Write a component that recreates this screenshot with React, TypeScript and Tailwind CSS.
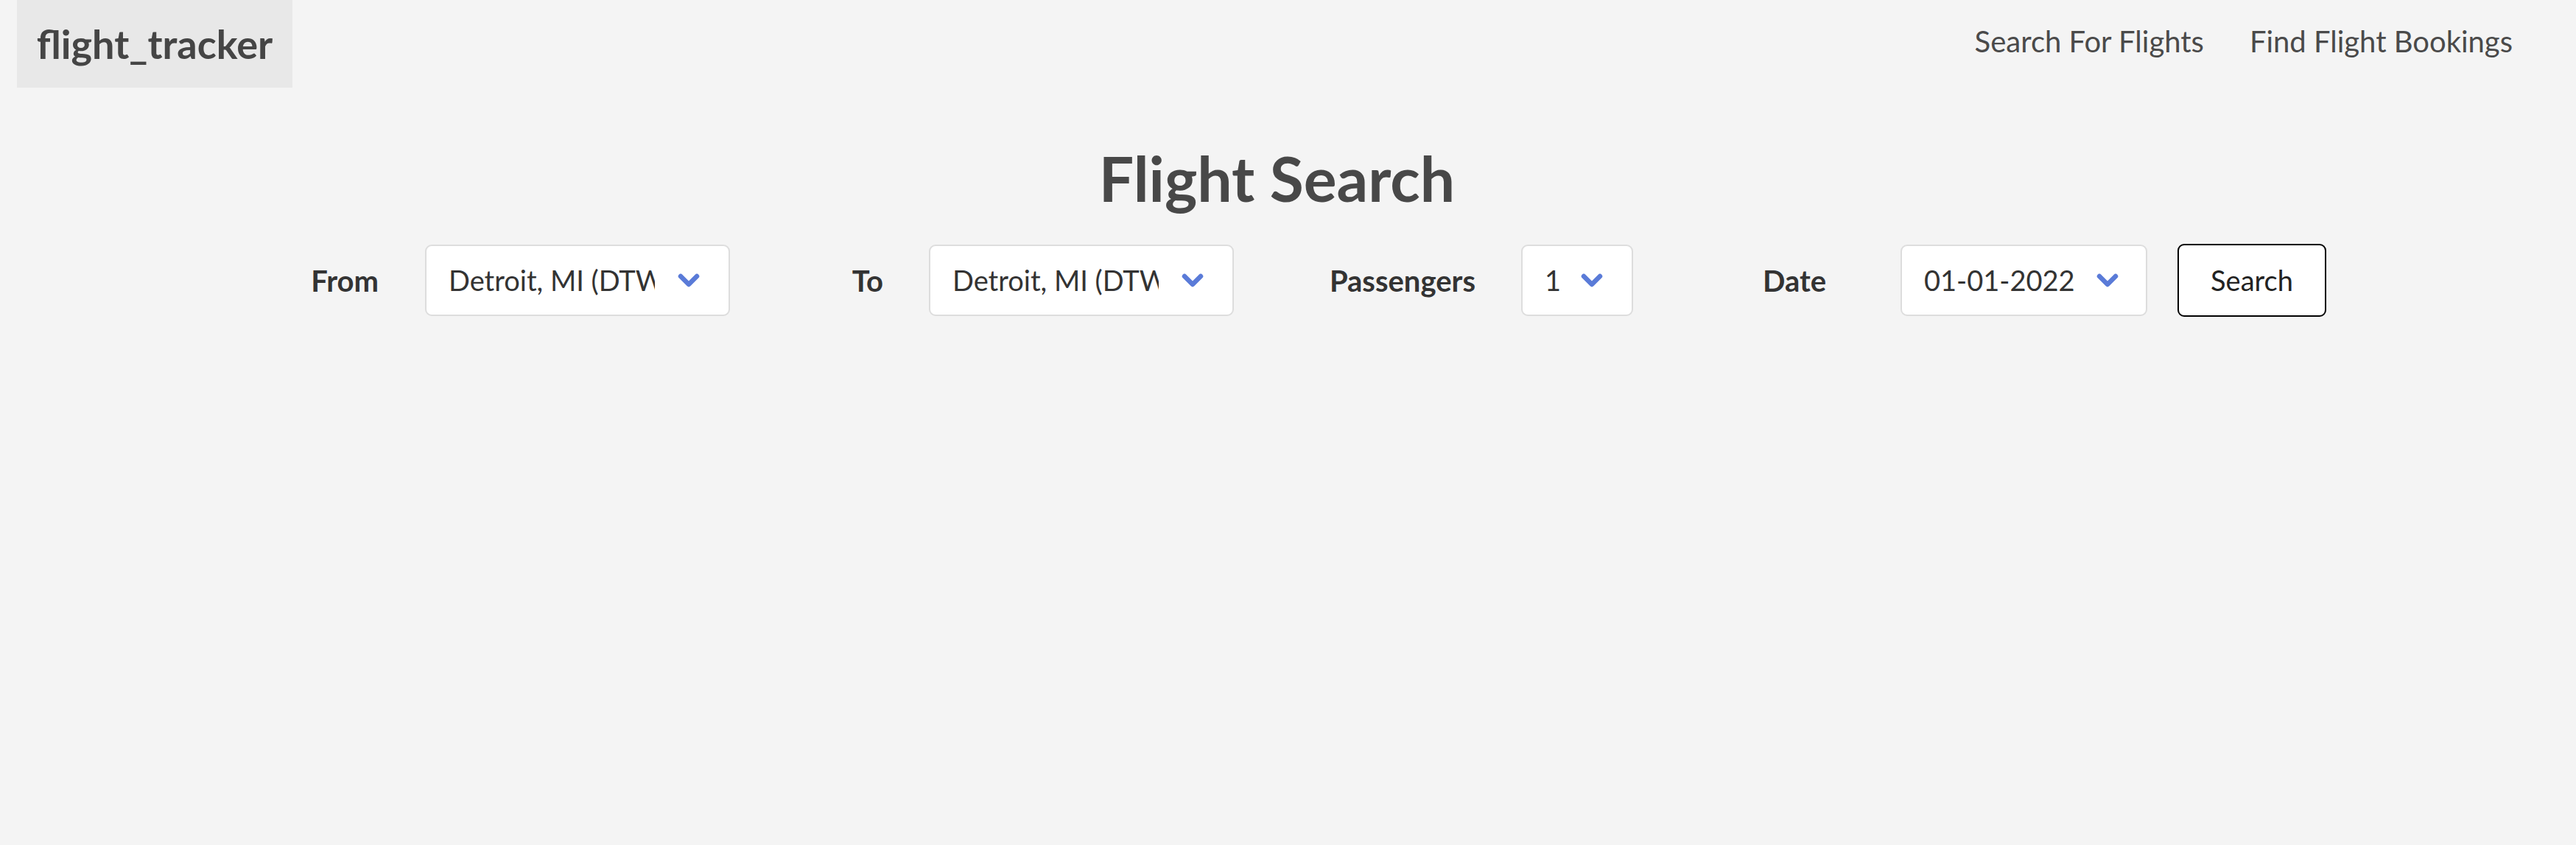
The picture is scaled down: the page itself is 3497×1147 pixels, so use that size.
import React from "react";

const Chevron = () => (
  <svg width="32" height="22" viewBox="0 0 32 22" className="shrink-0">
    <polyline points="5,5 16,16 27,5" fill="none" stroke="#5a7bd8" strokeWidth="6.5" strokeLinecap="round" strokeLinejoin="round" />
  </svg>
);

const Select = ({ value, width, textWidth, chevronGap }: { value: string; width: string; textWidth: string; chevronGap: string }) => (
  <div className={`${width} h-[97px] bg-white border-2 border-[#dddddd] rounded-[9px] flex items-center pl-[30px]`}>
    <div className={`${textWidth} overflow-hidden whitespace-nowrap text-[38px] text-[#333333]`}>{value}</div>
    <div className={chevronGap}>
      <Chevron />
    </div>
  </div>
);

export default function App() {
  return (
    <div className="min-h-screen bg-[#f4f4f4] text-[#444444]" style={{ fontFamily: "Lato, 'Open Sans', sans-serif" }}>
      <header className="flex items-start justify-between pl-[23px] pr-[86px]">
        <div className="bg-[#e8e8e8] h-[119px] w-[374px] flex items-center justify-center font-bold text-[54px] text-[#454545]">
          flight_tracker
        </div>
        <nav className="flex items-center h-[112px] gap-[62px] text-[40px] text-[#4a4a4a]">
          <a>Search For Flights</a>
          <a>Find Flight Bookings</a>
        </nav>
      </header>
      <h1 className="text-center font-bold text-[84px] leading-none mt-[81px] text-[#484848] pr-[30px]">Flight Search</h1>
      <div className="flex items-center mt-[47px] pl-[421px] text-[#333333]">
        <div className="w-[93px] text-right font-bold text-[40px]">From</div>
        <div className="ml-[63px]">
          <Select value="Detroit, MI (DTW)" width="w-[414px]" textWidth="w-[280px]" chevronGap="ml-[30px]" />
        </div>
        <div className="w-[208px] text-right font-bold text-[40px]">To</div>
        <div className="ml-[62px]">
          <Select value="Detroit, MI (DTW)" width="w-[414px]" textWidth="w-[280px]" chevronGap="ml-[30px]" />
        </div>
        <div className="w-[328px] text-right font-bold text-[40px]">Passengers</div>
        <div className="ml-[62px]">
          <Select value="1" width="w-[152px]" textWidth="w-[48px]" chevronGap="ml-0" />
        </div>
        <div className="w-[262px] text-right font-bold text-[40px]">Date</div>
        <div className="ml-[101px]">
          <Select value="01-01-2022" width="w-[335px]" textWidth="w-[233px]" chevronGap="ml-0" />
        </div>
        <button className="ml-[41px] w-[202px] h-[99px] border-2 border-black rounded-[9px] bg-white text-[38px] text-[#222222]">
          Search
        </button>
      </div>
    </div>
  );
}
